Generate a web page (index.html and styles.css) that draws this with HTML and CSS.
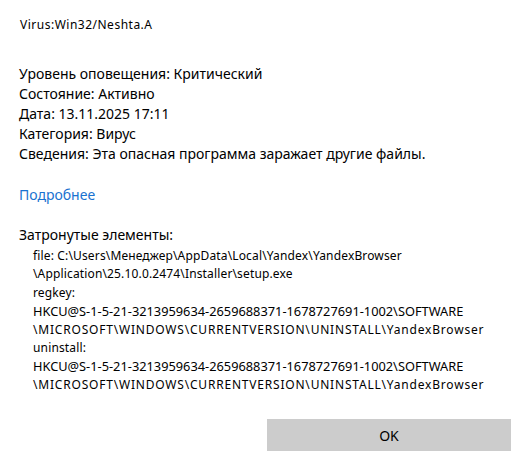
FILE: index.html
```html
<!DOCTYPE html>
<html lang="ru">
<head>
<meta charset="utf-8">
<title>Virus:Win32/Neshta.A</title>
<link rel="stylesheet" href="styles.css">
</head>
<body>
<div class="dialog">
  <div class="title">Virus:Win32/Neshta.A</div>
  <div class="details">
    <div class="row">Уровень оповещения: Критический</div>
    <div class="row">Состояние: Активно</div>
    <div class="row">Дата: 13.11.2025 17:11</div>
    <div class="row">Категория: Вирус</div>
    <div class="row">Сведения: Эта опасная программа заражает другие файлы.</div>
  </div>
  <a class="more" href="#">Подробнее</a>
  <div class="affected-head">Затронутые элементы:</div>
  <div class="items">
    <div class="item">file: C:\Users\Менеджер\AppData\Local\Yandex\YandexBrowser</div>
    <div class="item">\Application\25.10.0.2474\Installer\setup.exe</div>
    <div class="item">regkey:</div>
    <div class="item item-key">HKCU@S-1-5-21-3213959634-2659688371-1678727691-1002\SOFTWARE</div>
    <div class="item item-caps">\MICROSOFT\WINDOWS\CURRENTVERSION\UNINSTALL\YandexBrowser</div>
    <div class="item">uninstall:</div>
    <div class="item item-key">HKCU@S-1-5-21-3213959634-2659688371-1678727691-1002\SOFTWARE</div>
    <div class="item item-caps">\MICROSOFT\WINDOWS\CURRENTVERSION\UNINSTALL\YandexBrowser</div>
  </div>
  <div class="actions">
    <button class="ok" type="button">OK</button>
  </div>
</div>
</body>
</html>
```
FILE: styles.css
```css
html, body {
  margin: 0;
  padding: 0;
  background: #ffffff;
}
body {
  font-family: "Noto Sans", "Liberation Sans", sans-serif;
  color: #000000;
}
.dialog {
  display: flex;
  flex-direction: column;
  align-items: flex-start;
  padding: 17px 12px 0 19px;
}
.title {
  font-size: 12px;
  line-height: 16px;
  letter-spacing: 0.5px;
  padding-left: 1px;
}
.details {
  margin-top: 31px;
  font-size: 14px;
  line-height: 20px;
}
.row {
  white-space: nowrap;
}
.more {
  margin-top: 21px;
  font-size: 14px;
  line-height: 20px;
  color: #1a72d0;
  text-decoration: none;
}
.affected-head {
  margin-top: 20px;
  font-size: 14px;
  line-height: 20px;
}
.items {
  margin-top: 2px;
  padding-left: 14px;
  font-size: 12px;
  line-height: 18.4px;
}
.item {
  white-space: nowrap;
  letter-spacing: 0.15px;
}
.item-key {
  font-size: 12.8px;
  letter-spacing: 0;
}
.item-caps {
  letter-spacing: 0.8px;
}
.actions {
  align-self: stretch;
  display: flex;
  justify-content: flex-end;
  margin-top: 25px;
}
.ok {
  width: 244px;
  height: 32px;
  border: none;
  background: #cccccc;
  font-family: "Noto Sans", "Liberation Sans", sans-serif;
  font-size: 14px;
  color: #000000;
  padding: 0;
}
```
